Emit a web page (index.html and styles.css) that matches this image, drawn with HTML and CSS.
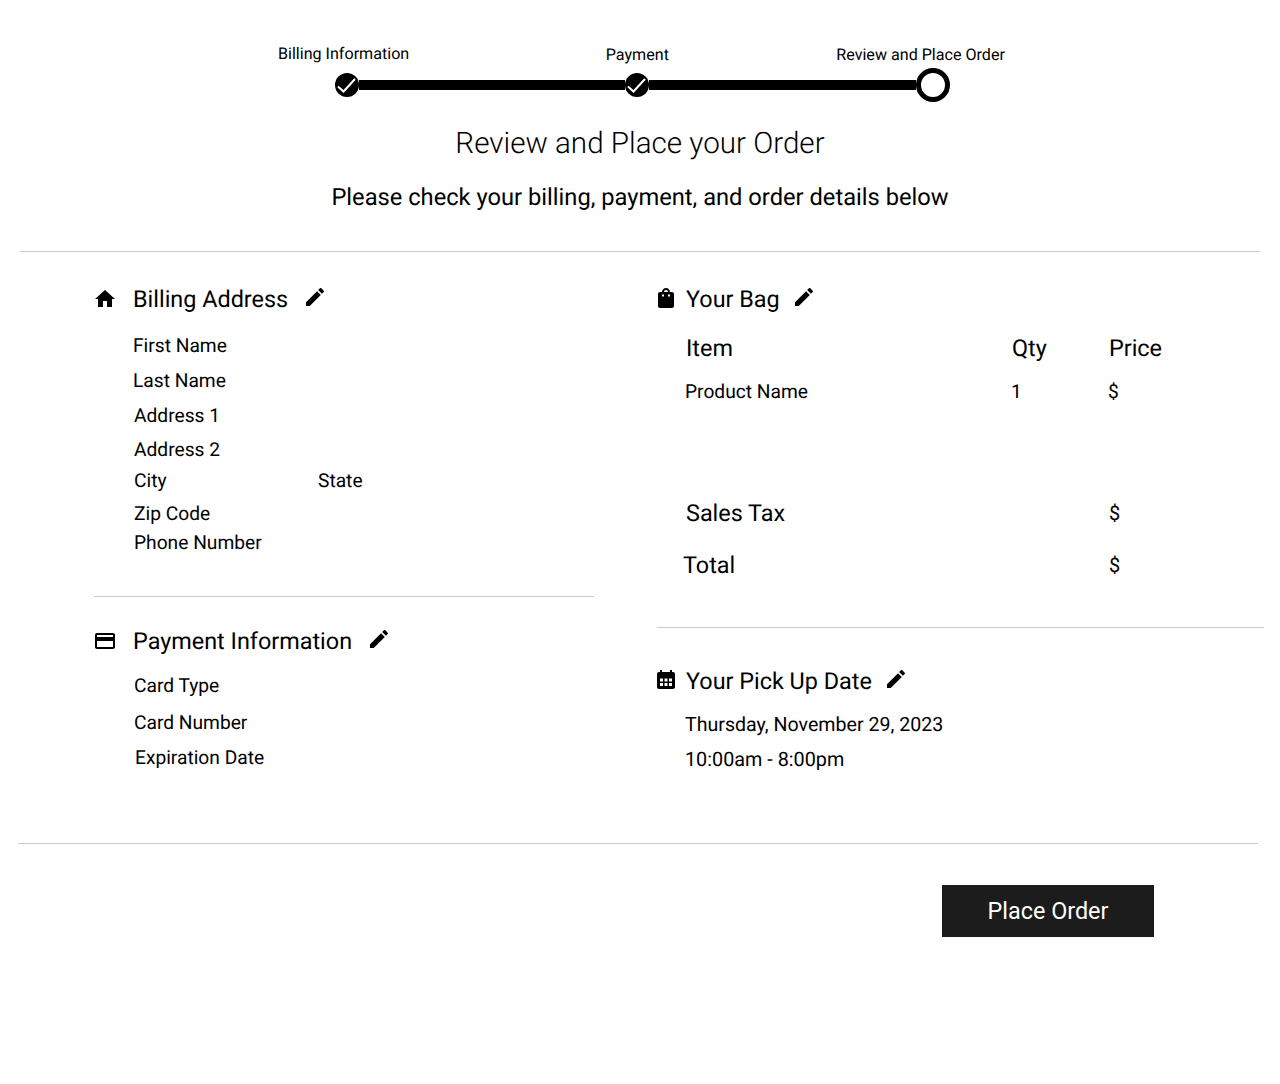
FILE: index.html
```html
<!DOCTYPE html>
<html lang="en">
<head>
    <meta charset="UTF-8">
    <meta name="viewport" content="width=device-width, initial-scale=1.0">
    <title>Review and Place your Order</title>
    <link rel="stylesheet" href="styles.css">
</head>
<body>
    <div class="steps">
        <div class="step-labels">
            <span class="step-label step-billing">Billing Information</span>
            <span class="step-label step-payment">Payment</span>
            <span class="step-label step-review">Review and Place Order</span>
        </div>
        <div class="step-track">
            <svg class="step-done" viewBox="0 0 24 24"><circle cx="12" cy="12" r="12"/><path d="M3 13.500l5.500 5L20 6" fill="none" stroke="#fff" stroke-width="2"/></svg>
            <div class="step-line line-first"></div>
            <svg class="step-done" viewBox="0 0 24 24"><circle cx="12" cy="12" r="12"/><path d="M3 13.500l5.500 5L20 6" fill="none" stroke="#fff" stroke-width="2"/></svg>
            <div class="step-line line-second"></div>
            <div class="step-current"></div>
        </div>
    </div>

    <h1 class="page-title">Review and Place your Order</h1>
    <p class="page-sub">Please check your billing, payment, and order details below</p>
    <hr class="rule rule-top">

    <div class="columns">
        <div class="col-left">
            <section class="billing">
                <h2 class="sec-head">
                    <svg class="icon icon-left" viewBox="0 0 24 24"><path d="M10 20v-6h4v6h5v-8h3L12 3 2 12h3v8z"/></svg>
                    Billing Address
                    <svg class="edit" viewBox="0 0 24 24"><path d="M3 17.250V21h3.750L17.810 9.940l-3.750-3.750L3 17.250zM20.710 7.040c.39-.39.39-1.020 0-1.410l-2.340-2.340c-.39-.39-1.020-.39-1.410 0l-1.830 1.830 3.750 3.750 1.830-1.830z"/></svg>
                </h2>
                <p class="line first-name">First Name</p>
                <p class="line last-name">Last Name</p>
                <p class="line address1">Address 1</p>
                <p class="line address2">Address 2</p>
                <p class="line city"><span class="city-name">City</span><span>State</span></p>
                <p class="line zip">Zip Code</p>
                <p class="line phone">Phone Number</p>
            </section>
            <hr class="rule rule-left">
            <section class="payment">
                <h2 class="sec-head">
                    <svg class="icon icon-left" viewBox="0 0 24 24"><path d="M20 4H4c-1.110 0-1.990.89-1.990 2L2 18c0 1.110.89 2 2 2h16c1.110 0 2-.89 2-2V6c0-1.110-.89-2-2-2zm0 14H4v-6h16v6zm0-10H4V6h16v2z"/></svg>
                    Payment Information
                    <svg class="edit" viewBox="0 0 24 24"><path d="M3 17.250V21h3.750L17.810 9.940l-3.750-3.750L3 17.250zM20.710 7.040c.39-.39.39-1.020 0-1.410l-2.340-2.340c-.39-.39-1.020-.39-1.410 0l-1.830 1.830 3.750 3.750 1.830-1.830z"/></svg>
                </h2>
                <p class="line card-type">Card Type</p>
                <p class="line card-number">Card Number</p>
                <p class="line card-exp">Expiration Date</p>
            </section>
        </div>

        <div class="col-right">
            <section class="bag">
                <h2 class="sec-head">
                    <svg class="icon icon-right icon-raise" viewBox="0 0 24 24"><path fill-rule="evenodd" d="M18 6h-2c0-2.210-1.790-4-4-4S8 3.790 8 6H6c-1.100 0-2 .9-2 2v12c0 1.100.9 2 2 2h12c1.100 0 2-.9 2-2V8c0-1.100-.9-2-2-2zM12 4c1.100 0 2 .9 2 2h-4c0-1.100.9-2 2-2zM8 8.500h2v2H8zM14 8.500h2v2h-2z"/></svg>
                    Your Bag
                    <svg class="edit edit-near" viewBox="0 0 24 24"><path d="M3 17.250V21h3.750L17.810 9.940l-3.750-3.750L3 17.250zM20.710 7.040c.39-.39.39-1.020 0-1.410l-2.340-2.340c-.39-.39-1.020-.39-1.410 0l-1.830 1.830 3.750 3.750 1.830-1.830z"/></svg>
                </h2>
                <div class="bag-row bag-titles"><span class="c-item">Item</span><span class="c-qty">Qty</span><span>Price</span></div>
                <div class="bag-row bag-product"><span class="c-item">Product Name</span><span class="c-qty">1</span><span>$</span></div>
                <div class="bag-row bag-tax"><span class="c-item c-sum">Sales Tax</span><span class="amount">$</span></div>
                <div class="bag-row bag-total"><span class="c-item c-sum">Total</span><span class="amount">$</span></div>
            </section>
            <hr class="rule rule-right">
            <section class="pickup">
                <h2 class="sec-head">
                    <svg class="icon icon-right icon-raise" viewBox="0 0 24 24"><path fill-rule="evenodd" d="M6 2h2v2h8V2h2v2h1c1.100 0 2 .9 2 2v13c0 1.100-.9 2-2 2H5c-1.100 0-2-.9-2-2V6c0-1.100.9-2 2-2h1zM6 10.500h3v3H6zM10.500 10.500h3v3h-3zM15 10.500h3v3h-3zM6 15h3v3H6zM10.500 15h3v3h-3zM15 15h3v3h-3z"/></svg>
                    Your Pick Up Date
                    <svg class="edit edit-near" viewBox="0 0 24 24"><path d="M3 17.250V21h3.750L17.810 9.940l-3.750-3.750L3 17.250zM20.710 7.040c.39-.39.39-1.020 0-1.410l-2.340-2.340c-.39-.39-1.020-.39-1.410 0l-1.830 1.830 3.750 3.750 1.830-1.830z"/></svg>
                </h2>
                <p class="line pick-date">Thursday, November 29, 2023</p>
                <p class="line pick-time">10:00am - 8:00pm</p>
            </section>
        </div>
    </div>

    <hr class="rule rule-bottom">
    <div class="actions">
        <button class="place-order">Place Order</button>
    </div>
</body>
</html>
```

FILE: styles.css
```css
body {
    font-family: Roboto, "Liberation Sans", sans-serif;
    margin: 0;
    padding: 0;
    background: #fff;
    color: #000;
    text-rendering: geometricPrecision;
}
.steps {
    padding-top: 44px;
}
.step-labels {
    display: flex;
    height: 23px;
    font-size: 16.1px;
    line-height: 20px;
}
.step-billing {
    margin-left: 278px;
}
.step-payment {
    margin-left: 196.6px;
    margin-top: 1px;
}
.step-review {
    margin-left: 167.4px;
    margin-top: 1px;
}
.step-track {
    display: flex;
    align-items: center;
    margin-left: 335px;
    height: 36px;
}
.step-done {
    width: 24px;
    height: 24px;
    flex: none;
}
.step-line {
    height: 10px;
    background: #000;
}
.line-first {
    width: 266px;
}
.line-second {
    width: 267px;
}
.step-current {
    width: 34px;
    height: 34px;
    box-sizing: border-box;
    border: 5px solid #000;
    border-radius: 50%;
    flex: none;
}
.page-title {
    font-size: 29.6px;
    font-weight: 300;
    line-height: 40px;
    text-align: center;
    margin: 21px 0 0;
}
.page-sub {
    font-size: 23.7px;
    font-weight: 450;
    line-height: 30px;
    text-align: center;
    margin: 18px 0 0;
}
.rule {
    border: none;
    border-top: 1px solid #ccc;
    margin: 0;
}
.rule-top {
    margin: 39px 20px 0;
}
.columns {
    display: flex;
    padding-left: 94px;
    height: 591px;
}
.col-left {
    width: 500px;
    margin-right: 63px;
}
.col-right {
    width: 607px;
    flex: none;
}
.sec-head {
    display: flex;
    align-items: center;
    font-size: 23.4px;
    font-weight: 400;
    line-height: 30px;
    margin: 0;
}
.icon {
    width: 24px;
    height: 24px;
    flex: none;
}
.icon-left {
    margin-left: -1px;
    margin-right: 16px;
}
.icon-right {
    margin-left: -3px;
    margin-right: 8px;
}
.icon-raise {
    margin-bottom: 2px;
}
.edit {
    width: 24px;
    height: 24px;
    margin-left: 15px;
    margin-top: -4px;
    flex: none;
}
.edit-near {
    margin-left: 12px;
}
.billing {
    padding-top: 32px;
}
.line {
    font-size: 19.2px;
    line-height: 24px;
    margin: 0;
}
.first-name { margin: 20px 0 0 39px; }
.last-name { margin: 11px 0 0 39px; }
.address1 { margin: 11px 0 0 40px; }
.address2 { margin: 10px 0 0 40px; }
.city { margin: 7px 0 0 40px; display: flex; }
.city-name { width: 184px; }
.zip { margin: 9px 0 0 40px; }
.phone { margin: 5px 0 0 40px; }
.rule-left {
    margin-top: 41px;
}
.payment {
    padding-top: 29px;
}
.card-type { margin: 18px 0 0 40px; }
.card-number { margin: 13px 0 0 40px; }
.card-exp { margin: 11px 0 0 41px; }
.bag {
    padding-top: 32px;
}
.bag-row {
    display: flex;
}
.c-item {
    width: 326px;
    margin-left: 29px;
}
.c-qty {
    width: 97px;
}
.amount {
    margin-left: 97px;
}
.bag-titles {
    font-size: 23.4px;
    line-height: 30px;
    margin-top: 19px;
}
.bag-product {
    font-size: 19.2px;
    line-height: 24px;
    margin-top: 17px;
}
.bag-product .c-item {
    margin-left: 28px;
}
.bag-tax, .bag-total {
    font-size: 23.4px;
    line-height: 30px;
}
.bag-tax .amount, .bag-total .amount {
    font-size: 20px;
}
.bag-tax {
    margin-top: 94px;
}
.bag-total {
    margin-top: 22px;
}
.bag-total .c-item {
    margin-left: 26px;
    width: 326px;
}
.bag-total .amount {
    margin-left: 100px;
}
.rule-right {
    margin-top: 47px;
}
.pickup {
    padding-top: 38px;
}
.pick-date { margin: 17px 0 0 28px; font-size: 19.6px; }
.pick-time { margin: 11px 0 0 28px; font-size: 19.8px; }
.rule-bottom {
    margin: 0 22px 0 18px;
}
.actions {
    display: flex;
    padding: 41px 0 0 942px;
}
.place-order {
    width: 212px;
    height: 52px;
    background: #1c1c1c;
    color: #fff;
    border: none;
    font-family: inherit;
    font-size: 23.4px;
}
```
